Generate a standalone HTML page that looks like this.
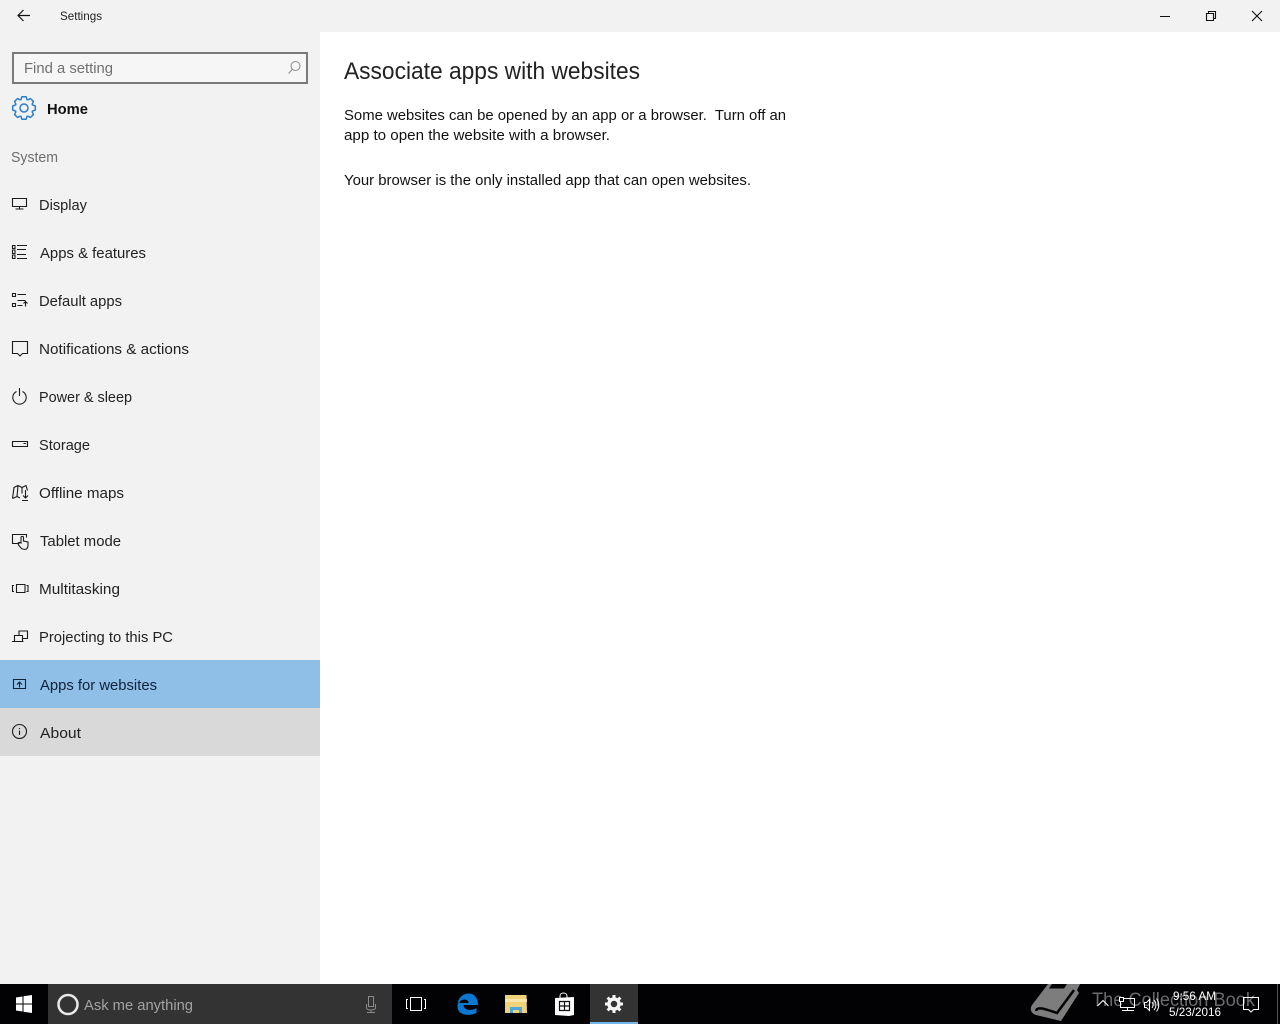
<!DOCTYPE html>
<html lang="en"><head><meta charset="utf-8"><title>Settings</title>
<style>
html,body{margin:0;padding:0;width:1280px;height:1024px;overflow:hidden;background:#fff}
svg{display:block}
text{font-family:"Liberation Sans",sans-serif;fill:#222;font-size:15px}
.i{fill:none;stroke:#1c1c1c;stroke-width:1.100}
.t{fill:none;stroke:#fff;stroke-width:1}
</style></head><body>
<svg width="1280" height="1024" viewBox="0 0 1280 1024" xmlns="http://www.w3.org/2000/svg">
<rect width="1280" height="1024" fill="#fff"/>
<rect width="1280" height="32" fill="#f2f2f2"/>
<rect y="32" width="320" height="952" fill="#f2f2f2"/>
<path d="M30 15.500H18M23.500 10L18 15.500L23.500 21" fill="none" stroke="#111" stroke-width="1.200"/>
<text x="60" y="20" style="font-size:12px" textLength="42" lengthAdjust="spacingAndGlyphs">Settings</text>
<path d="M1160 16.500H1170" stroke="#111" fill="none"/>
<path class="i" style="stroke:#111" d="M1206.500 13.500h7v7h-7zM1208.500 13.500v-2h7v7h-2"/>
<path d="M1252 11L1262 21M1262 11L1252 21" stroke="#111" stroke-width="1.100" fill="none"/>

<rect x="13" y="53" width="294" height="30" fill="#f6f6f6" stroke="#7a7a7a" stroke-width="2"/>
<text x="24" y="73" textLength="89" lengthAdjust="spacingAndGlyphs" style="fill:#707070">Find a setting</text>
<circle cx="295.500" cy="66" r="4.500" fill="none" stroke="#8a8a8a"/><path d="M292.300 69.500L288.500 73.500" stroke="#8a8a8a" fill="none"/>

<g transform="translate(24 108)" fill="none" stroke="#2a7fc9" stroke-width="1.500" stroke-linejoin="round">
<circle r="4"/>
<path d="M-3.300-7.900L-2-11.300H2L3.300-7.900"/>
<path transform="rotate(45)" d="M-3.300-7.900L-2-11.300H2L3.300-7.900"/>
<path transform="rotate(90)" d="M-3.300-7.900L-2-11.300H2L3.300-7.900"/>
<path transform="rotate(135)" d="M-3.300-7.900L-2-11.300H2L3.300-7.900"/>
<path transform="rotate(180)" d="M-3.300-7.900L-2-11.300H2L3.300-7.900"/>
<path transform="rotate(225)" d="M-3.300-7.900L-2-11.300H2L3.300-7.900"/>
<path transform="rotate(270)" d="M-3.300-7.900L-2-11.300H2L3.300-7.900"/>
<path transform="rotate(315)" d="M-3.300-7.900L-2-11.300H2L3.300-7.900"/>
</g>
<text x="47" y="114" textLength="41" lengthAdjust="spacingAndGlyphs" style="font-weight:bold;fill:#111">Home</text>
<text x="11" y="162" textLength="47" lengthAdjust="spacingAndGlyphs" style="fill:#6e6e6e">System</text>

<rect y="660" width="320" height="48" fill="#8fbee7"/>
<rect y="708" width="320" height="48" fill="#d9d9d9"/>

<text x="39" y="210" textLength="48" lengthAdjust="spacingAndGlyphs">Display</text>
<text x="40" y="258" textLength="106" lengthAdjust="spacingAndGlyphs">Apps &amp; features</text>
<text x="39" y="306" textLength="83" lengthAdjust="spacingAndGlyphs">Default apps</text>
<text x="39" y="354" textLength="150" lengthAdjust="spacingAndGlyphs">Notifications &amp; actions</text>
<text x="39" y="402" textLength="93" lengthAdjust="spacingAndGlyphs">Power &amp; sleep</text>
<text x="39" y="450" textLength="51" lengthAdjust="spacingAndGlyphs">Storage</text>
<text x="39" y="498" textLength="85" lengthAdjust="spacingAndGlyphs">Offline maps</text>
<text x="40" y="546" textLength="81" lengthAdjust="spacingAndGlyphs">Tablet mode</text>
<text x="39" y="594" textLength="81" lengthAdjust="spacingAndGlyphs">Multitasking</text>
<text x="39" y="642" textLength="134" lengthAdjust="spacingAndGlyphs">Projecting to this PC</text>
<text x="40" y="690" textLength="117" lengthAdjust="spacingAndGlyphs" style="fill:#0f2238">Apps for websites</text>
<text x="40" y="738" textLength="41" lengthAdjust="spacingAndGlyphs">About</text>

<!-- display -->
<path class="i" d="M12.500 198.500h14v8h-14zM19.500 206.500v2.500M15.500 209h8"/>
<!-- apps & features -->
<path class="i" d="M12.500 245.500h2.500v3h-2.500zM12.500 250h2.500v3.500h-2.500zM12.500 255h2.500v3.500h-2.500zM17 245.500h10M17 249.500h9M17 254.500h9M17 258.500h10"/>
<!-- default apps -->
<path class="i" d="M12.500 293.500h3v3h-3zM12.500 303.500h3v3h-3zM17.500 294.500h8.500M17.500 300.500h8M17.500 305.500h5M25.500 306.500v-4.500M23.500 303.500l2-2 2 2"/>
<!-- notifications -->
<path class="i" d="M12.500 341.500h15v12h-5l-2.500 2.500-2.500-2.500h-5z"/>
<!-- power -->
<path class="i" d="M16.500 391.500a6.700 6.700 0 1 0 6 0M19.500 388v8"/>
<!-- storage -->
<path class="i" d="M12.500 441.500h15v5h-15z"/><path d="M23.500 443.500h2.500" stroke="#222" fill="none"/>
<!-- maps -->
<path class="i" d="M12.500 498.500L14 487.500l4-2 4 2 4-2 1.500 5M18 485.500l-1 11-4.500 2M17 496.500l3 1.500M22 487.500v6M25.500 490v8M23 495.500l2.500 2.500 2.500-2.500M22 500.500h6"/>
<!-- tablet -->
<path class="i" d="M19.500 543.500h-7v-9h14v3M21 548c-1-1.500-3-3-3-4.500 0-1 1.500-1.500 3-.5v-5.500c0-1.500 2.500-1.500 2.500 0v3.500l4.500 1v3.500c0 1-.5 2.500-1.500 3.500-1 .5-4.500.5-5.500-1z"/>
<!-- multitasking -->
<path class="i" d="M16.500 584.500h8.500v8h-8.500zM14 585.500h-1.500v6H14M26.500 585.500h1.500v6h-1.500"/>
<!-- projecting -->
<path class="i" d="M19 635.500v-4.500h8.500v7.500H23M14.500 641v-5.500h8v5.500M12 641.500h11.500"/>
<!-- apps for websites -->
<path class="i" style="stroke:#0f2238" d="M13.500 679.500h12v9h-12zM19.500 687.500v-5M17 684.500l2.500-2.500 2.500 2.500"/>
<!-- about -->
<circle class="i" cx="19.500" cy="731.500" r="7"/><path class="i" d="M19.500 730.500v4.500M19.500 728v1"/>

<text x="344" y="79" textLength="296" lengthAdjust="spacingAndGlyphs" style="font-size:24px;fill:#222">Associate apps with websites</text>
<text x="344" y="120" textLength="442" lengthAdjust="spacingAndGlyphs" xml:space="preserve" style="fill:#111">Some websites can be opened by an app or a browser.  Turn off an</text>
<text x="344" y="140" textLength="266" lengthAdjust="spacingAndGlyphs" style="fill:#111">app to open the website with a browser.</text>
<text x="344" y="185" textLength="407" lengthAdjust="spacingAndGlyphs" style="fill:#111">Your browser is the only installed app that can open websites.</text>

<!-- taskbar -->
<rect y="984" width="1280" height="40" fill="#020204"/>
<rect x="48" y="984" width="344" height="40" fill="#333"/>
<path fill="#fff" d="M16 997.500l6.500-1v7H16zM23.500 996.300l8.500-1.300v8.500h-8.500zM16 1004.500h6.500v7l-6.500-1zM23.500 1004.500H32v8.500l-8.500-1.300z"/>
<circle cx="68" cy="1004.500" r="9.500" fill="none" stroke="#e8e8e8" stroke-width="2.500"/>
<text x="84" y="1010" textLength="109" lengthAdjust="spacingAndGlyphs" style="fill:#a3a3a3">Ask me anything</text>
<path d="M368.500 996.500h5v10h-5zM366.500 1004v3.500c0 1.500 1.500 2.500 4.500 2.500s4.500-1 4.500-2.500V1004M371 1010v2M367 1012.500h8" fill="none" stroke="#8a8a8a"/>

<path class="t" d="M410.500 997.500h11v13h-11zM408 999.500h-1.500v9H408M424 999.500h1.500v9H424"/>
<!-- edge -->
<path fill="#0a78d0" d="M457.500 1004c1-7 6-10.500 11-10.500 6.500 0 9.500 5 9.500 11.500h-14.500c.3 5 7 6.500 13 3v5c-7 3.500-19 2.500-19-6.500 0-3 1.500-5.500 4-7-1.500 1.500-2 3-2 3.500h9c0-4-6-5.500-11.500 1z"/>
<!-- explorer -->
<path fill="#efd27a" d="M505 995h21.500l.5 18h-22z"/>
<path fill="#f8e6a8" d="M505 999h22v3h-22z"/>
<path fill="#4fa8d8" d="M510 1013v-6h12v6h-3v-3h-6v3z"/>
<!-- store -->
<path fill="none" stroke="#fff" d="M560 998v-2c0-4 7-4 7 0v2"/>
<path fill="#fff" d="M555 998l19-1v18l-5 1-14-1z"/>
<path fill="none" stroke="#111" stroke-width="1.200" d="M559.500 1001.500h10v9h-10zM564.500 1001.500v9M559.500 1006h10"/>
<!-- settings btn -->
<rect x="590" y="984" width="48" height="40" fill="#333"/>
<rect x="590" y="1022" width="48" height="2" fill="#74b6ea"/>
<g transform="translate(614 1004)" fill="none" stroke="#f5f5f5">
<circle r="5" stroke-width="3.500"/>
<path stroke-width="3" d="M0-9v3M0 6v3M-9 0h3M6 0h3M-6.400-6.400l2.100 2.100M4.300 4.300l2.100 2.100M6.400-6.400l-2.100 2.100M-4.300 4.300l-2.100 2.100"/>
</g>

<!-- watermark -->
<path fill="#7d7d7d" d="M1048 984H1080L1077 990L1079 993L1061 1021L1036 1015C1030 1013 1030 1008 1032 1005z"/>
<path fill="#040406" d="M1052 984h15l-3 4.500h-15z"/>
<path fill="none" stroke="#040406" stroke-width="2.500" d="M1036 1011C1037 1006 1045 1009 1057 1013L1074 990"/>
<text x="1092" y="1006" textLength="163" lengthAdjust="spacingAndGlyphs" style="font-size:19px;fill:#6b6b6b">The Collection Book</text>

<path class="t" d="M1097.500 1006l5.500-5.500 5.500 5.500"/>
<path class="t" d="M1120.500 998.500h14v9h-14zM1127.500 1007.500v3M1122 1010.500h12"/><rect x="1119.500" y="997.500" width="4" height="4" fill="#020204" stroke="#fff"/>
<path class="t" d="M1144.500 1002.500h2l3-3v11l-3-3h-2zM1152 1002c1.500 2 1.500 4 0 6M1154 1000c2.500 3 2.500 7 0 10M1156.500 998.500c3 4 3 9 0 13"/>
<text x="1173" y="1000" textLength="43" lengthAdjust="spacingAndGlyphs" style="font-size:12px;fill:#fff">9:56 AM</text>
<text x="1169" y="1016" textLength="52" lengthAdjust="spacingAndGlyphs" style="font-size:12px;fill:#fff">5/23/2016</text>
<path class="t" d="M1243.500 997.500h15v12h-5l-2.500 2.500-2.500-2.500h-5z"/>
<path d="M1277.500 984v40" stroke="#555" fill="none"/>
</svg>
</body></html>
